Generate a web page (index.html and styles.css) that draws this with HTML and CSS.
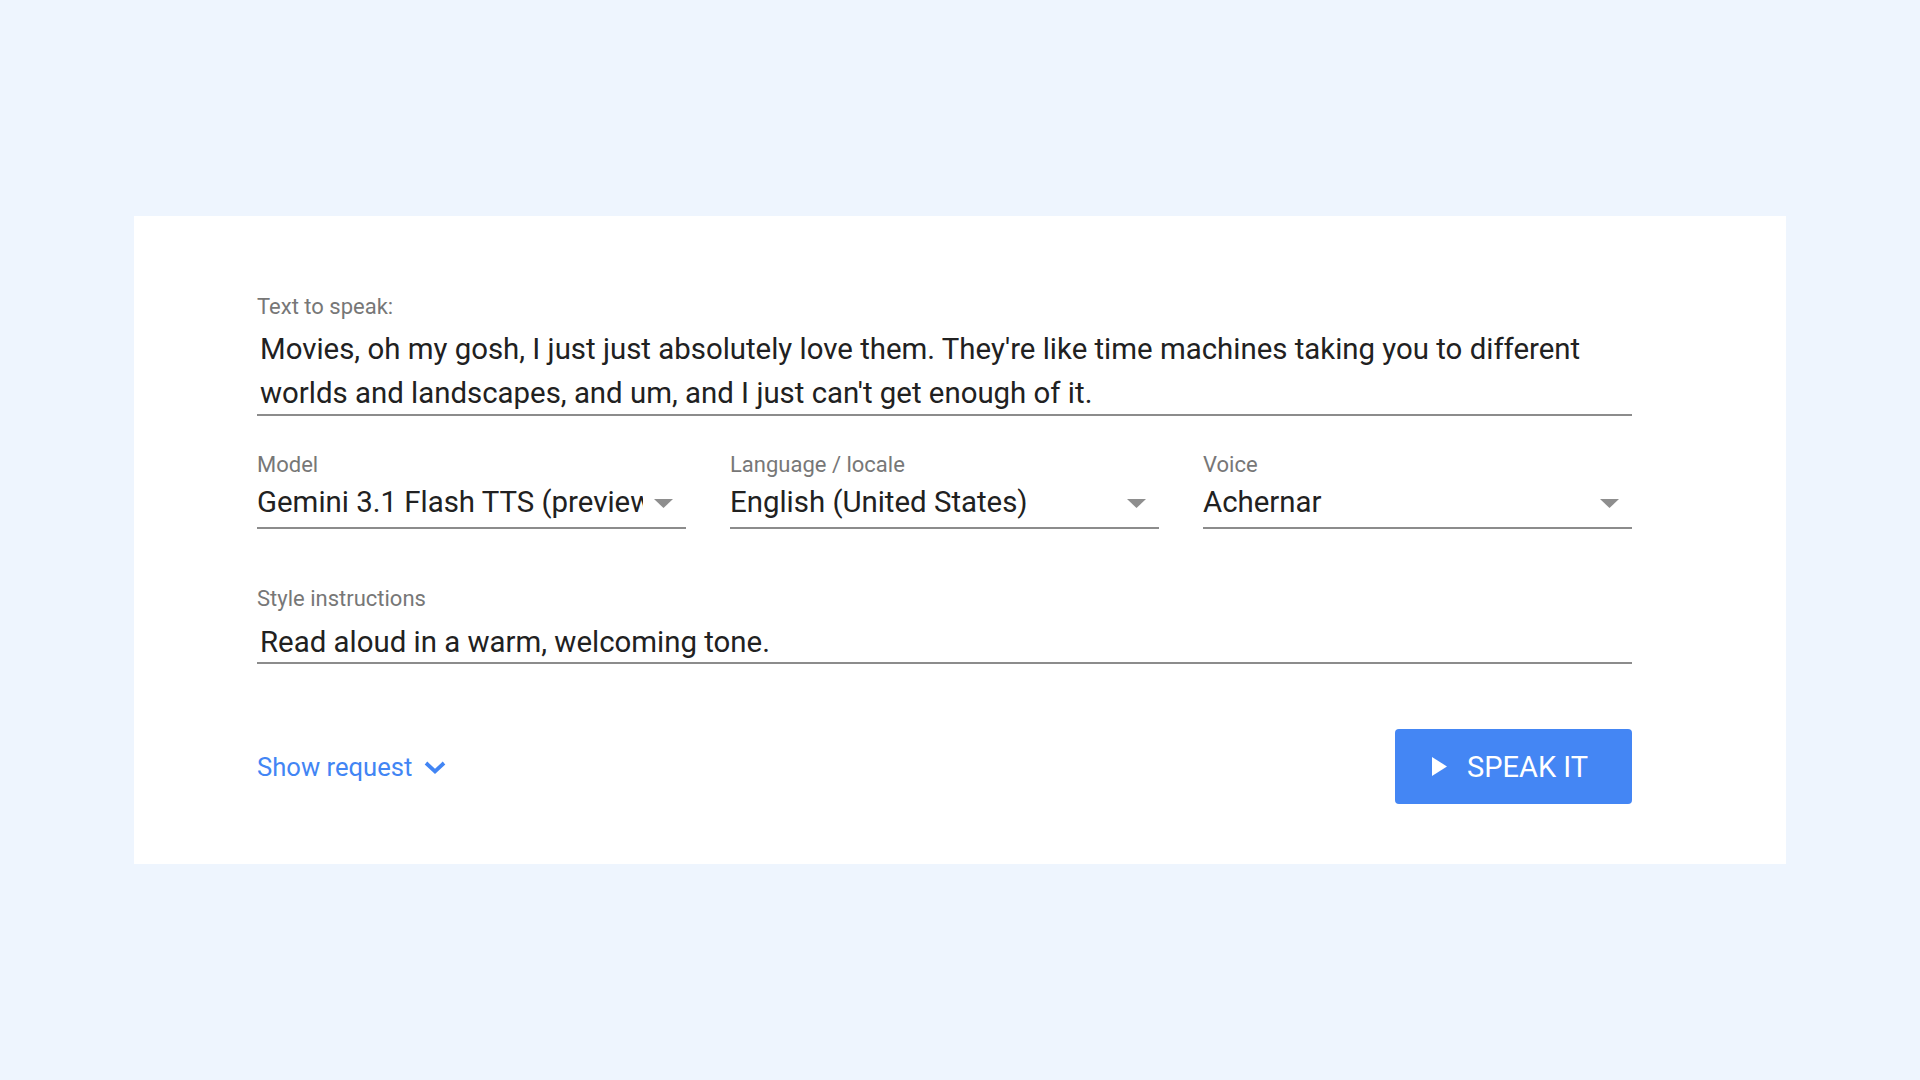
FILE: index.html
```html
<!DOCTYPE html>
<html lang="en">
<head>
<meta charset="utf-8">
<title>Speak it</title>
<link rel="stylesheet" href="styles.css">
</head>
<body>
<main class="card">
  <div class="field">
    <label class="field-label" for="tts-text">Text to speak:</label>
    <textarea id="tts-text" class="text-area" rows="2" spellcheck="false">Movies, oh my gosh, I just just absolutely love them. They're like time machines taking you to different worlds and landscapes, and um, and I just can't get enough of it.</textarea>
  </div>

  <div class="select-row">
    <div class="field">
      <span class="field-label">Model</span>
      <div class="select">
        <span class="select-value">Gemini 3.1 Flash TTS (preview)</span>
        <svg class="select-arrow" width="19" height="9" viewBox="0 0 19 9"><polygon points="0,0 19,0 9.5,9" fill="#8e8e8e"/></svg>
      </div>
    </div>
    <div class="field">
      <span class="field-label">Language / locale</span>
      <div class="select">
        <span class="select-value">English (United States)</span>
        <svg class="select-arrow" width="19" height="9" viewBox="0 0 19 9"><polygon points="0,0 19,0 9.5,9" fill="#8e8e8e"/></svg>
      </div>
    </div>
    <div class="field">
      <span class="field-label">Voice</span>
      <div class="select">
        <span class="select-value">Achernar</span>
        <svg class="select-arrow" width="19" height="9" viewBox="0 0 19 9"><polygon points="0,0 19,0 9.5,9" fill="#8e8e8e"/></svg>
      </div>
    </div>
  </div>

  <div class="field style-field">
    <label class="field-label" for="tts-style">Style instructions</label>
    <input id="tts-style" class="text-input" type="text" value="Read aloud in a warm, welcoming tone." spellcheck="false">
  </div>

  <div class="actions">
    <a class="show-request" href="#">
      <span>Show request</span>
      <svg width="22" height="13" viewBox="0 0 22 13"><polyline points="2,2 11,10.4 20,2" fill="none" stroke="#4285f4" stroke-width="3.8"/></svg>
    </a>
    <button class="speak-btn" type="button">
      <svg width="15" height="19" viewBox="0 0 15 19"><polygon points="0,0 15,9.5 0,19" fill="#ffffff"/></svg>
      <span>SPEAK IT</span>
    </button>
  </div>
</main>
</body>
</html>
```

FILE: styles.css
```css
html, body {
  margin: 0;
  padding: 0;
}

body {
  min-height: 100vh;
  background: #eef5fe;
  display: flex;
  align-items: center;
  justify-content: center;
  font-family: Roboto, "Liberation Sans", Arial, sans-serif;
  color: #212121;
}

.card {
  width: 1652px;
  box-sizing: border-box;
  background: #ffffff;
  padding: 78px 154px 60px 123px;
  display: flex;
  flex-direction: column;
}

.field {
  display: flex;
  flex-direction: column;
  min-width: 0;
}

.field-label {
  display: block;
  font-size: 22px;
  line-height: 26px;
  color: #777777;
}

.text-area {
  margin: 8px 0 0;
  padding: 0 3px;
  height: 86px;
  box-sizing: content-box;
  border: none;
  border-bottom: 2px solid #8c8c8c;
  outline: none;
  resize: none;
  overflow: hidden;
  background: transparent;
  font-family: inherit;
  font-size: 29.4px;
  line-height: 43.5px;
  color: #212121;
}

.select-row {
  margin-top: 36px;
  display: grid;
  grid-template-columns: repeat(3, 1fr);
  column-gap: 44px;
}

.select {
  display: flex;
  align-items: center;
  padding: 7px 0 8px;
  border-bottom: 2px solid #8c8c8c;
}

.select-value {
  flex: 1;
  min-width: 0;
  overflow: hidden;
  white-space: nowrap;
  font-size: 29.4px;
  line-height: 34px;
}

.select-arrow {
  flex: none;
  margin: 3px 13px 0 11px;
}

.style-field {
  margin-top: 57px;
}

.text-input {
  margin: 0;
  padding: 13px 3px 3px;
  height: 34px;
  box-sizing: content-box;
  border: none;
  border-bottom: 2px solid #8c8c8c;
  outline: none;
  background: transparent;
  font-family: inherit;
  font-size: 29.4px;
  line-height: 34px;
  color: #212121;
}

.actions {
  margin-top: 65px;
  display: flex;
  align-items: center;
  justify-content: space-between;
}

.show-request {
  display: flex;
  align-items: center;
  gap: 12px;
  font-size: 25.6px;
  line-height: 28px;
  color: #4285f4;
  text-decoration: none;
}

.show-request svg {
  margin-top: 2px;
}

.speak-btn {
  width: 237px;
  height: 75px;
  box-sizing: border-box;
  padding: 0 0 0 37px;
  border: none;
  border-radius: 4px;
  background: #4486f4;
  color: #ffffff;
  display: flex;
  align-items: center;
  gap: 20px;
  font-family: inherit;
  font-size: 29px;
  line-height: 32px;
  cursor: pointer;
}
```
